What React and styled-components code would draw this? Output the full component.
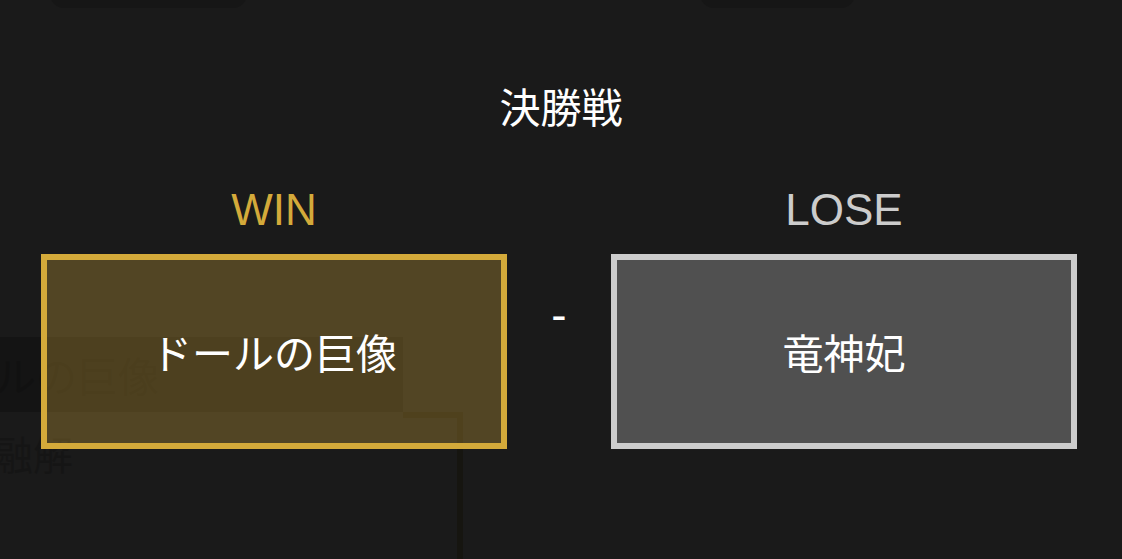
import React from "react";
import styled, { createGlobalStyle } from "styled-components";

const GlobalStyle = createGlobalStyle`
  html, body {
    margin: 0;
    padding: 0;
    background: #343434;
    overflow: hidden;
  }
  body {
    font-family: "Noto Sans CJK JP", "Liberation Sans", sans-serif;
  }
`;

// underlying bracket page (dimmed by the overlay)
const Page = styled.div`
  position: relative;
  width: 1122px;
  height: 559px;
  background: #343434;
  overflow: hidden;
`;

const TopBar = styled.div`
  display: flex;
  margin-top: -36px;
  padding-left: 50px;
  gap: 453px;
`;

const Pill = styled.div`
  width: ${(p) => p.$w}px;
  height: 44px;
  border-radius: 14px;
  background: #2c2c2c;
`;

const Bracket = styled.div`
  display: flex;
  margin-top: 329px;
  margin-left: -100px;
`;

const MatchColumn = styled.div`
  display: flex;
  flex-direction: column;
`;

const EntryCard = styled.div`
  width: 503px;
  height: 75px;
  box-sizing: border-box;
  padding-left: 13px;
  display: flex;
  align-items: center;
  background: #282828;
  color: #222222;
  font-size: 41px;
  line-height: 1;
`;

const EntryNote = styled.div`
  margin-top: 21px;
  margin-left: 93px;
  color: #2b2b2b;
  font-size: 40px;
  line-height: 1;
`;

const Connector = styled.div`
  margin-top: 75px;
  width: 54px;
  height: 200px;
  border-top: 6px solid #2c2a20;
  border-right: 6px solid #2c2a20;
`;

// result modal
const Overlay = styled.div`
  position: absolute;
  inset: 0;
  background: rgba(0, 0, 0, 0.5);
  display: flex;
  flex-direction: column;
  align-items: center;
`;

const Title = styled.h2`
  margin: 85px 0 0 0;
  color: #ffffff;
  font-size: 41px;
  font-weight: 400;
  line-height: 1;
`;

const ResultRow = styled.div`
  align-self: stretch;
  margin-top: 61px;
  padding: 0 45px 0 41px;
  display: grid;
  grid-template-columns: 1fr 104px 1fr;
  align-items: center;
`;

const Side = styled.div`
  display: flex;
  flex-direction: column;
  align-items: center;
`;

const Label = styled.div`
  font-family: "Liberation Sans", sans-serif;
  font-size: 44px;
  line-height: 46px;
  color: ${(p) => (p.$win ? "#d4aa3a" : "#cccccc")};
  margin-bottom: 21px;
`;

const NameBox = styled.div`
  align-self: stretch;
  height: 195px;
  box-sizing: border-box;
  border: 6px solid ${(p) => (p.$win ? "#d4aa3a" : "#cccccc")};
  background: ${(p) => (p.$win ? "rgba(212, 170, 58, 0.3)" : "#505050")};
  display: flex;
  align-items: center;
  justify-content: center;
  color: #ffffff;
  font-size: 41px;
  line-height: 1;
`;

const Dash = styled.div`
  text-align: center;
  font-family: "Liberation Sans", sans-serif;
  font-size: 46px;
  line-height: 46px;
  color: #ffffff;
  margin-bottom: 6px;
`;

function App() {
  const result = {
    title: "決勝戦",
    winner: "ドールの巨像",
    loser: "竜神妃",
  };

  return (
    <>
      <GlobalStyle />
      <Page>
        <TopBar>
          <Pill $w={197} />
          <Pill $w={155} />
        </TopBar>
        <Bracket>
          <MatchColumn>
            <EntryCard>ドールの巨像</EntryCard>
            <EntryNote>融解</EntryNote>
          </MatchColumn>
          <Connector />
        </Bracket>

        <Overlay>
          <Title>{result.title}</Title>
          <ResultRow>
            <Side>
              <Label $win>WIN</Label>
              <NameBox $win>{result.winner}</NameBox>
            </Side>
            <Dash>-</Dash>
            <Side>
              <Label>LOSE</Label>
              <NameBox>{result.loser}</NameBox>
            </Side>
          </ResultRow>
        </Overlay>
      </Page>
    </>
  );
}

export default App;
